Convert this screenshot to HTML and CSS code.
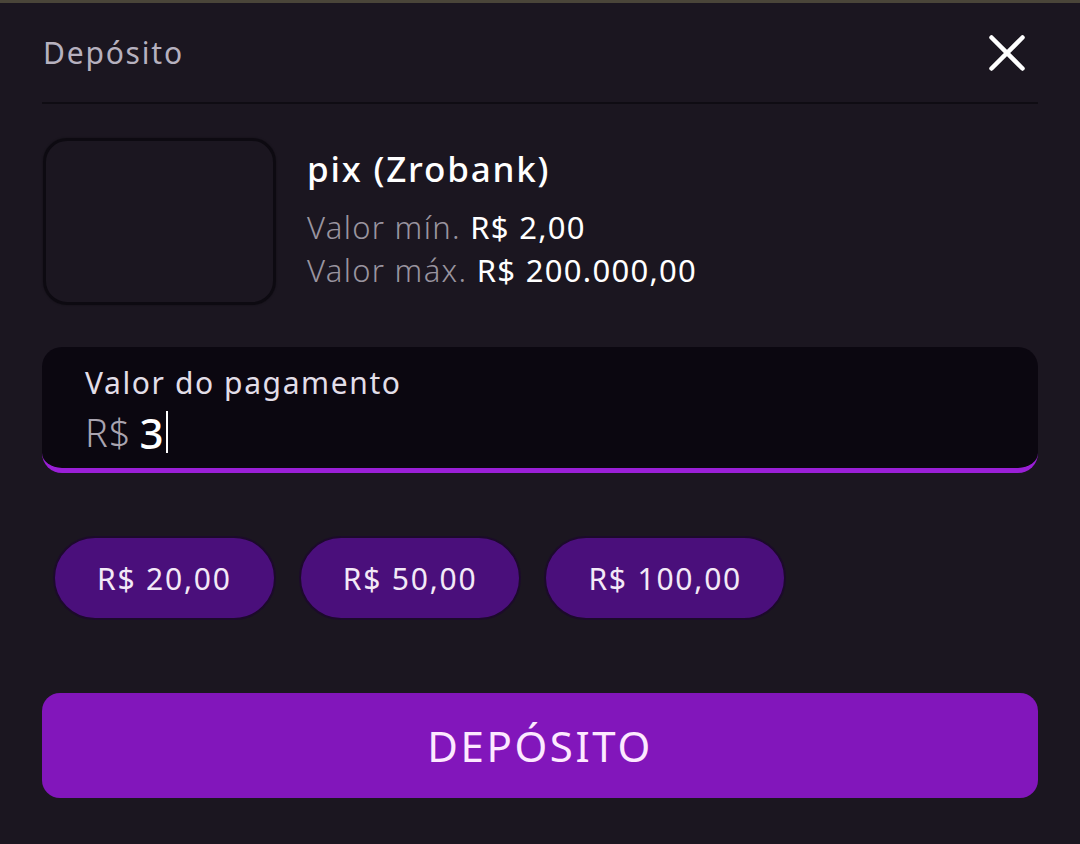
FILE: index.html
```html
<!DOCTYPE html>
<html lang="pt-BR">
<head>
  <meta charset="UTF-8">
  <meta name="viewport" content="width=device-width, initial-scale=1.0">
  <title>Depósito</title>
  <link rel="stylesheet" href="styles.css">
</head>
<body>
  <div class="modal">
    <div class="modal-header">
      <h2 class="modal-title">Depósito</h2>
      <button class="close" aria-label="Fechar">
        <svg width="38" height="38" viewBox="0 0 38 38">
          <path d="M3.5 3.5 L34.5 34.5 M34.5 3.5 L3.5 34.5" stroke="#fff" stroke-width="4.5" stroke-linecap="round" fill="none"/>
        </svg>
      </button>
    </div>

    <div class="method">
      <div class="method-logo"></div>
      <div class="method-info">
        <div class="method-name">pix (Zrobank)</div>
        <div class="limit">Valor mín. <span>R$ 2,00</span></div>
        <div class="limit">Valor máx. <span>R$ 200.000,00</span></div>
      </div>
    </div>

    <div class="amount-field">
      <label class="amount-label">Valor do pagamento</label>
      <div class="amount-value">
        <span class="currency">R$</span>
        <span class="amount">3</span><span class="caret"></span>
      </div>
    </div>

    <div class="presets">
      <button class="chip">R$ 20,00</button>
      <button class="chip">R$ 50,00</button>
      <button class="chip">R$ 100,00</button>
    </div>

    <button class="submit">DEPÓSITO</button>
  </div>
</body>
</html>
```

FILE: styles.css
```css
body {
  margin: 0;
  background: #1b1620;
  font-family: "Noto Sans", "Open Sans", sans-serif;
  color: #fff;
  border-top: 3px solid #4a4539;
  height: 841px;
}

.modal {
  padding: 0 42px;
}

.modal-header {
  display: flex;
  justify-content: space-between;
  align-items: center;
  height: 99px;
  border-bottom: 2px solid #0f0c13;
}

.modal-title {
  margin: 0;
  font-size: 30px;
  font-weight: 400;
  letter-spacing: 1.8px;
  color: #b6b1bf;
  padding-left: 1px;
}

.close {
  background: none;
  border: none;
  padding: 0;
  margin-right: 12px;
  cursor: pointer;
  display: flex;
}

.method {
  display: flex;
  gap: 31px;
  margin-top: 34px;
}

.method-logo {
  width: 227px;
  height: 161px;
  border: 3px solid #0d0a11;
  border-radius: 24px;
  box-sizing: content-box;
  margin-left: 1px;
  box-shadow: 0 0 2px rgba(0, 0, 0, 0.4);
}

.method-info {
  padding-top: 9px;
}

.method-name {
  font-size: 35px;
  font-weight: 500;
  letter-spacing: 1.8px;
  line-height: 44px;
  margin-bottom: 15px;
}

.limit {
  font-size: 31px;
  font-weight: 300;
  letter-spacing: 1.3px;
  color: #99949f;
  line-height: 43px;
}

.limit span {
  color: #fff;
  font-weight: 400;
}

.amount-field {
  margin-top: 42px;
  background: #0b0710;
  border-radius: 20px;
  border-bottom: 5px solid #9a1fd7;
  padding: 16px 43px 0;
  box-sizing: border-box;
  height: 126px;
}

.amount-label {
  display: block;
  font-size: 30px;
  font-weight: 400;
  letter-spacing: 1.6px;
  color: #e2dee8;
  line-height: 40px;
}

.amount-value {
  display: flex;
  align-items: center;
  height: 58px;
}

.currency {
  font-size: 38px;
  font-weight: 300;
  letter-spacing: 1px;
  color: #a9a4b0;
  margin-right: 8px;
}

.amount {
  font-size: 42px;
  font-weight: 500;
  color: #fff;
}

.caret {
  width: 2px;
  height: 42px;
  background: #fff;
  margin-left: 2px;
}

.presets {
  display: flex;
  gap: 23px;
  margin-top: 63px;
  padding-left: 11px;
}

.chip {
  height: 84px;
  padding: 0 42px;
  border-radius: 42px;
  background: #4a0f7b;
  border: 2px solid #1c0a2b;
  color: #f3e9f7;
  font-family: inherit;
  font-size: 30px;
  font-weight: 400;
  letter-spacing: 1.8px;
  cursor: pointer;
}

.submit {
  display: block;
  width: 100%;
  height: 105px;
  margin-top: 73px;
  border: none;
  border-radius: 18px;
  background: #8216bb;
  color: #fde9ff;
  font-family: inherit;
  font-size: 42px;
  font-weight: 400;
  letter-spacing: 2.6px;
  cursor: pointer;
}
```
